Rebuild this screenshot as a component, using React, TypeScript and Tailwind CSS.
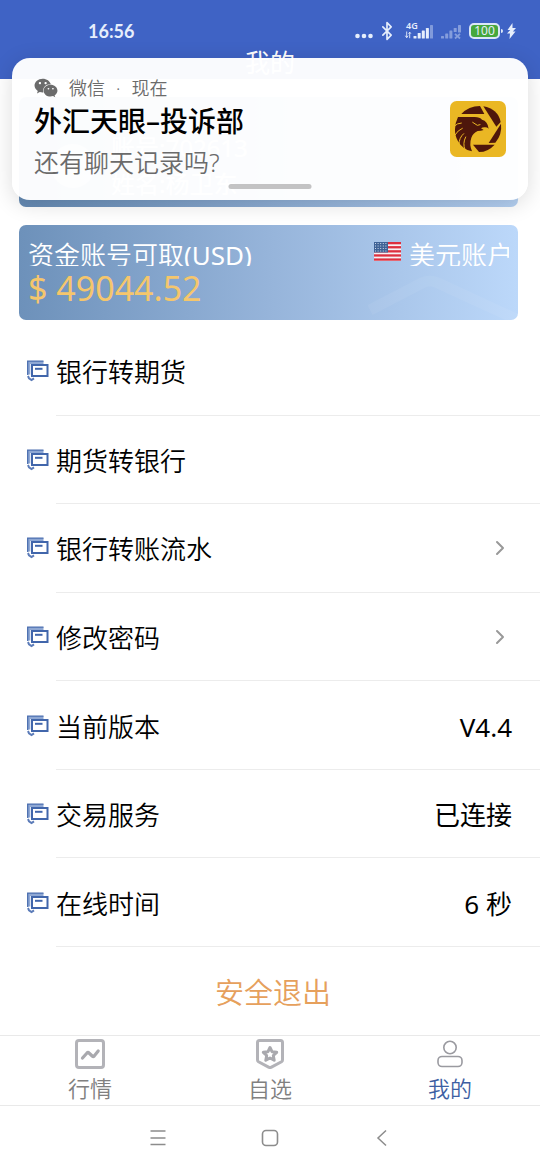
import type { ReactNode } from 'react'
import { ChevronRight, Bluetooth } from 'lucide-react'
import { FaWeixin } from 'react-icons/fa'

type Row = { label: string; value?: string; action?: boolean; chevron?: boolean }

const rows: Row[] = [
  { label: '银行转期货', action: true },
  { label: '期货转银行', action: true },
  { label: '银行转账流水', action: true, chevron: true },
  { label: '修改密码', action: true, chevron: true },
  { label: '当前版本', value: 'V4.4' },
  { label: '交易服务', value: '已连接' },
  { label: '在线时间', value: '6 秒' },
]

export default function App() {
  return (
    <div className="relative flex min-h-screen flex-col bg-white font-['Noto_Sans','Noto_Sans_CJK_SC',sans-serif] text-black">
      <header className="bg-[#3f63c5] text-white">
        <StatusBar />
        <h1 className="text-center text-[25px] leading-[33px]">我的</h1>
      </header>

      <Notification />

      <main className="flex flex-1 flex-col">
        <section className="mr-[22px] ml-[19px] space-y-[18px] pt-[18px] pb-[7px]">
          <ProfileCard />
          <BalanceCard />
        </section>

        <ul className="flex flex-1 flex-col">
          {rows.map((row) => <ListRow key={row.label} row={row} />)}
        </ul>

        <button className="h-[88px] w-full pt-1 pl-1.5 text-[29px] font-[350] text-[#e6a05c]">安全退出</button>
      </main>

      <TabBar />
      <SystemNav />
    </div>
  )
}

function StatusBar() {
  return (
    <div className="flex h-[46px] items-center justify-between pt-4 pr-6 pl-[88px] text-[#e6eefc]">
      <span className="font-['Lato','Noto_Sans',sans-serif] text-[18px] font-bold">16:56</span>
      <div className="flex items-center gap-2">
        <svg width="18" height="20" viewBox="0 0 18 20" fill="currentColor">
          <circle cx="2.5" cy="15" r="2.3" />
          <circle cx="9" cy="15" r="2.3" />
          <circle cx="15.5" cy="15" r="2.3" />
        </svg>
        <Bluetooth className="-ml-1 h-5 w-5" strokeWidth={2} />
        <svg className="overflow-visible" width="28" height="20" viewBox="0 0 28 20" fill="currentColor">
          <text x="1" y="8" fontSize="9" fontWeight="600">4G</text>
          <path d="M1.700 10.500v6M.3 14.700l1.400 2 1.400-2M4.700 17.200v-6M3.500 12.700l1.200-1.500 1.200 1.500" fill="none" stroke="currentColor" strokeWidth=".9" />
          <rect x="8.500" y="15" width="3" height="2.500" rx=".6" />
          <rect x="12.700" y="12" width="3" height="5.500" rx=".6" />
          <rect x="16.800" y="9.500" width="3" height="8" rx=".6" />
          <rect x="20.900" y="7" width="3" height="10.500" rx=".6" />
          <rect x="25" y="4" width="3" height="13.500" rx=".6" opacity=".4" />
        </svg>
        <svg width="20" height="20" viewBox="0 0 20 20" fill="currentColor" opacity=".42">
          <rect x="0" y="15" width="3" height="2.500" rx=".6" />
          <rect x="4.200" y="12.500" width="3" height="5" rx=".6" />
          <rect x="8.400" y="9.500" width="3" height="8" rx=".6" />
          <rect x="12.700" y="7" width="3" height="4" rx=".6" />
          <rect x="17" y="4" width="3" height="7.500" rx=".6" />
          <path d="M14 12.800l5 4.700M19 12.800l-5 4.700" stroke="currentColor" strokeWidth="1.800" />
        </svg>
        <div className="flex items-center gap-px">
          <span className="flex h-4 w-[31px] items-center justify-center rounded-[5px] border-2 border-[#dbe7f8] bg-[#46a83c] text-[12px] leading-3">
            100
          </span>
          <span className="h-1 w-0.5 rounded-r bg-[#dbe7f8]" />
        </div>
        <svg className="-ml-1" width="9" height="16" viewBox="0 0 9 16" fill="currentColor">
          <path d="M5.500 0L.5 7h2.700L0 10.500h3L2.500 16 8.500 8.500H5.800L9 5H5.500z" />
        </svg>
      </div>
    </div>
  )
}

function Notification() {
  return (
    <aside className="absolute inset-x-3 top-[58px] z-10 flex h-[142px] items-center justify-between rounded-[18px] bg-white/97 px-[22px] shadow-[0_4px_22px_rgba(0,0,0,0.14)]">
      <div>
        <p className="flex items-center gap-[11px] text-[18px] leading-6 font-[350] text-[#6b6b6b]">
          <FaWeixin className="h-6 w-6" />
          <span>微信</span>
          <span>·</span>
          <span>现在</span>
        </p>
        <h2 className="text-[28px] leading-[42px] font-medium">外汇天眼–投诉部</h2>
        <p className="text-[25px] leading-10 font-[350] text-[#6b6b6b]">还有聊天记录吗?</p>
      </div>
      <EagleLogo />
      <span className="absolute bottom-[11px] left-1/2 h-[5px] w-[83px] -translate-x-1/2 rounded-full bg-[#c3c3c4]" />
    </aside>
  )
}

function ProfileCard() {
  return (
    <div className="flex h-[110px] items-center gap-4 rounded-[7px] bg-linear-to-r from-[#6489b2] via-[#8cacd3] to-[#b4d0f2] px-8 pt-7 text-white">
      <span className="h-11 w-11 rounded-full bg-white/60" />
      <div className="text-[24px] leading-9">
        <p>账号:702613</p>
        <p>姓名:杨卫东</p>
      </div>
    </div>
  )
}

function BalanceCard() {
  return (
    <div className="relative h-[95px] overflow-hidden rounded-[7px] bg-linear-to-r from-[#6d91ba] via-[#96b4da] to-[#bcd8fa] px-[9px] pt-[15px]">
      <svg className="absolute right-0 bottom-0" width="150" height="50" viewBox="0 0 150 50">
        <path d="M2 40L54 13q8-4 16 0l78 36" fill="none" stroke="#fff" strokeWidth="11" opacity=".06" />
      </svg>
      <div className="flex h-[26px] items-start justify-between overflow-hidden text-[26px] leading-[30px] text-white">
        <span className="font-[350]">资金账号可取<span className="font-normal">(USD)</span></span>
        <span className="-mr-1 flex gap-2 font-[350]">
          <UsFlag />
          美元账户
        </span>
      </div>
      <p className="text-[34px] leading-11 text-[#f5c66c]">$ 49044.52</p>
    </div>
  )
}

function ListRow({ row }: { row: Row }) {
  const body = (
    <>
      <StackIcon />
      <span className="ml-[7px] flex h-full flex-1 items-center justify-between border-b border-[#ececec] pt-1 pr-7 text-[26px]">
        <span className="font-[350]">{row.label}</span>
        {row.value && <span>{row.value}</span>}
        {row.chevron && <ChevronRight className="-mt-1 text-[#999]" size={24} strokeWidth={2} />}
      </span>
    </>
  )
  return (
    <li className="flex min-h-20 flex-1">
      {row.action
        ? <button className="flex w-full items-center pl-[27px] text-left">{body}</button>
        : <div className="flex w-full items-center pl-[27px]">{body}</div>}
    </li>
  )
}

function TabBar() {
  return (
    <nav className="grid h-[70px] grid-cols-3 border-t border-[#e9e9e9] text-[#808080]">
      <Tab label="行情">
        <rect x="2.500" y="2.500" width="27" height="27" rx="2.500" stroke="#b3b3b8" strokeWidth="3" />
        <path d="M8.500 20l4.500-5q1-1 2 0l3.200 3q1 1 2 0l4-5" stroke="#a9a9ae" strokeWidth="3.200" strokeLinecap="round" />
      </Tab>
      <Tab label="自选">
        <path d="M5.500 2.500h21q2 0 2 2V22q0 1.200-1 1.800L17 29.300q-1 .6-2 0L4.500 23.800q-1-.6-1-1.800V4.500q0-2 2-2z" stroke="#b3b3b8" strokeWidth="3" />
        <path d="M16 9.500l2 4.200 4.700.6-3.400 3.200.9 4.700L16 20l-4.200 2.200.9-4.700-3.400-3.200 4.700-.6z" stroke="#a9a9ae" strokeWidth="3" strokeLinejoin="round" />
      </Tab>
      <Tab label="我的" active>
        <circle cx="16" cy="9.500" r="6.200" stroke="#9a9aa0" strokeWidth="1.600" />
        <rect x="4" y="18.500" width="24" height="10" rx="4" stroke="#9a9aa0" strokeWidth="1.600" />
      </Tab>
    </nav>
  )
}

function Tab({ label, active, children }: { label: string; active?: boolean; children: ReactNode }) {
  return (
    <button className="flex flex-col items-center pt-0.5">
      <svg width="32" height="32" viewBox="0 0 32 32" fill="none">{children}</svg>
      <span className={active ? 'pt-1 text-[22px] leading-7 font-[350] text-[#3d5fa3]' : 'pt-1 text-[22px] leading-7 font-[350]'}>{label}</span>
    </button>
  )
}

function SystemNav() {
  return (
    <div className="flex h-[65px] items-center justify-center border-t border-[#e9e9e9] text-[#8c8c8c]">
      <button aria-label="菜单" className="flex w-28 justify-center">
        <svg width="18" height="18" viewBox="0 0 18 18" fill="none" stroke="currentColor" strokeWidth="1.400">
          <path d="M1.500 2h15M1.500 9h15M1.500 15.500h15" />
        </svg>
      </button>
      <button aria-label="主页" className="flex w-28 justify-center">
        <svg width="18" height="18" viewBox="0 0 18 18" fill="none" stroke="currentColor" strokeWidth="1.600">
          <rect x="1.500" y="1.500" width="15" height="15" rx="3.500" />
        </svg>
      </button>
      <button aria-label="返回" className="flex w-28 justify-center">
        <svg width="18" height="18" viewBox="0 0 18 18" fill="none" stroke="currentColor" strokeWidth="1.500">
          <path d="M13 1.500L5 9l8 7.500" />
        </svg>
      </button>
    </div>
  )
}

// two overlapping sheets with a small tail at the lower left
function StackIcon() {
  return (
    <svg className="shrink-0" width="22" height="22" viewBox="0 0 22 22" fill="none">
      <path d="M1.700 14.500V2.500H16.500" stroke="#8fa8d4" strokeWidth="3.200" />
      <path d="M.7 15V1.200H16.500" stroke="#4c6fb0" strokeWidth="1.300" />
      <rect x="5" y="5" width="15.500" height="11" fill="#fff" stroke="#4166ab" strokeWidth="2" />
      <path d="M8 8.800h7.500" stroke="#4166ab" strokeWidth="2" />
      <path d="M1 16l1 2.300 2.500 1.700 2.500-1.700" stroke="#5b7bb8" strokeWidth="2" />
    </svg>
  )
}

function UsFlag() {
  return (
    <svg className="mt-0.5" width="27" height="19" viewBox="0 0 27 19">
      <rect width="27" height="19" fill="#f6f2f5" />
      {[0, 1, 2, 3, 4].map((i) => <rect key={i} y={i * 4.1} width="27" height="2.300" fill="#dd2f3f" />)}
      <rect width="14" height="10.500" fill="#3f6396" />
      {[1.5, 4, 6.5, 9].map((y) => (
        <path key={y} d={`M1 ${y}h12`} stroke="#dfe8f3" strokeWidth=".9" strokeDasharray="1 1.600" />
      ))}
    </svg>
  )
}

function EagleLogo() {
  return (
    <svg width="56" height="56" viewBox="0 0 168 168">
      <rect width="168" height="168" rx="20" fill="#eab724" />
      <g fill="#4e160b">
        <path d="M34 39Q56 15 90 15l13 24z" />
        <path d="M100 16q44 8 52 47l-13 14z" />
        <path d="M153 68q4 32-17 57l-20 1z" />
        <path d="M69 131h65q-20 22-47 22z" />
        <path d="M24 48h50q16 0 22 8 17 4 20 27-5-5-13-4-6 0-10 3l8 5q-8 3-18 3-14 6-19 20-7 20 2 41-14-2-24-10-12-9-18-20-10-17-9-37 1-20 9-36z" />
      </g>
      <g fill="none" stroke="#eab724" strokeWidth="3" strokeLinecap="round">
        <path d="M12 76q10-10 22-10" />
        <path d="M15 102q8-14 22-20" />
        <path d="M27 130q0-20 14-32" />
        <path d="M45 146q-8-18 2-38" />
        <path d="M68 64l14 9 8-2" />
      </g>
    </svg>
  )
}
